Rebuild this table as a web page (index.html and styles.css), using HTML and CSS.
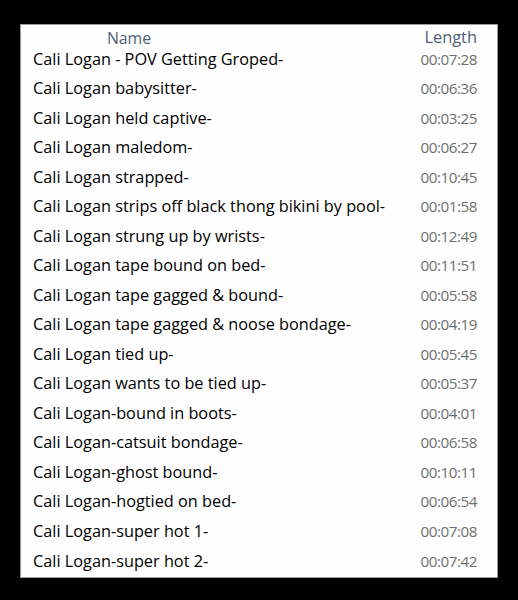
FILE: index.html
```html
<!DOCTYPE html>
<html>
<head>
<meta charset="utf-8">
<link rel="stylesheet" href="styles.css">
</head>
<body>
<div class="panel">
  <div class="header">
    <span class="h-name">Name</span>
    <span class="h-len">Length</span>
  </div>
  <div class="list">
    <div class="row"><span class="name">Cali Logan - POV Getting Groped-</span><span class="len">00:07:28</span></div>
    <div class="row"><span class="name">Cali Logan babysitter-</span><span class="len">00:06:36</span></div>
    <div class="row"><span class="name">Cali Logan held captive-</span><span class="len">00:03:25</span></div>
    <div class="row"><span class="name">Cali Logan maledom-</span><span class="len">00:06:27</span></div>
    <div class="row"><span class="name">Cali Logan strapped-</span><span class="len">00:10:45</span></div>
    <div class="row"><span class="name">Cali Logan strips off black thong bikini by pool-</span><span class="len">00:01:58</span></div>
    <div class="row"><span class="name">Cali Logan strung up by wrists-</span><span class="len">00:12:49</span></div>
    <div class="row"><span class="name">Cali Logan tape bound on bed-</span><span class="len">00:11:51</span></div>
    <div class="row"><span class="name">Cali Logan tape gagged &amp; bound-</span><span class="len">00:05:58</span></div>
    <div class="row"><span class="name">Cali Logan tape gagged &amp; noose bondage-</span><span class="len">00:04:19</span></div>
    <div class="row"><span class="name">Cali Logan tied up-</span><span class="len">00:05:45</span></div>
    <div class="row"><span class="name">Cali Logan wants to be tied up-</span><span class="len">00:05:37</span></div>
    <div class="row"><span class="name">Cali Logan-bound in boots-</span><span class="len">00:04:01</span></div>
    <div class="row"><span class="name">Cali Logan-catsuit bondage-</span><span class="len">00:06:58</span></div>
    <div class="row"><span class="name">Cali Logan-ghost bound-</span><span class="len">00:10:11</span></div>
    <div class="row"><span class="name">Cali Logan-hogtied on bed-</span><span class="len">00:06:54</span></div>
    <div class="row"><span class="name">Cali Logan-super hot 1-</span><span class="len">00:07:08</span></div>
    <div class="row"><span class="name">Cali Logan-super hot 2-</span><span class="len">00:07:42</span></div>
  </div>
</div>
</body>
</html>
```
FILE: styles.css
```css
html, body {
  margin: 0;
  padding: 0;
  background: #000;
}
body {
  padding: 24px 20px 22px 20px;
  font-family: "Open Sans", "Noto Sans", sans-serif;
}
.panel {
  background: #fefefe;
  border: 1px solid #9a9a9a;
  height: 554px;
  box-sizing: border-box;
  padding: 0 20px 0 12px;
}
.header {
  display: flex;
  justify-content: space-between;
  height: 19px;
  padding-top: 3px;
  box-sizing: content-box;
  font-size: 15.8px;
  line-height: 20px;
  color: #4e5f78;
}
.h-name {
  width: 192px;
  text-align: center;
}
.h-len {
  font-size: 16.4px;
  text-align: right;
  margin-top: -1px;
}
.list {
  display: flex;
  flex-direction: column;
  margin-top: -3px;
}
.row {
  display: flex;
  justify-content: space-between;
  align-items: center;
  height: 29.53px;
}
.name {
  font-size: 16.3px;
  color: #000;
}
.len {
  font-size: 15.2px;
  color: #6e6e6e;
  letter-spacing: -0.45px;
}
```
